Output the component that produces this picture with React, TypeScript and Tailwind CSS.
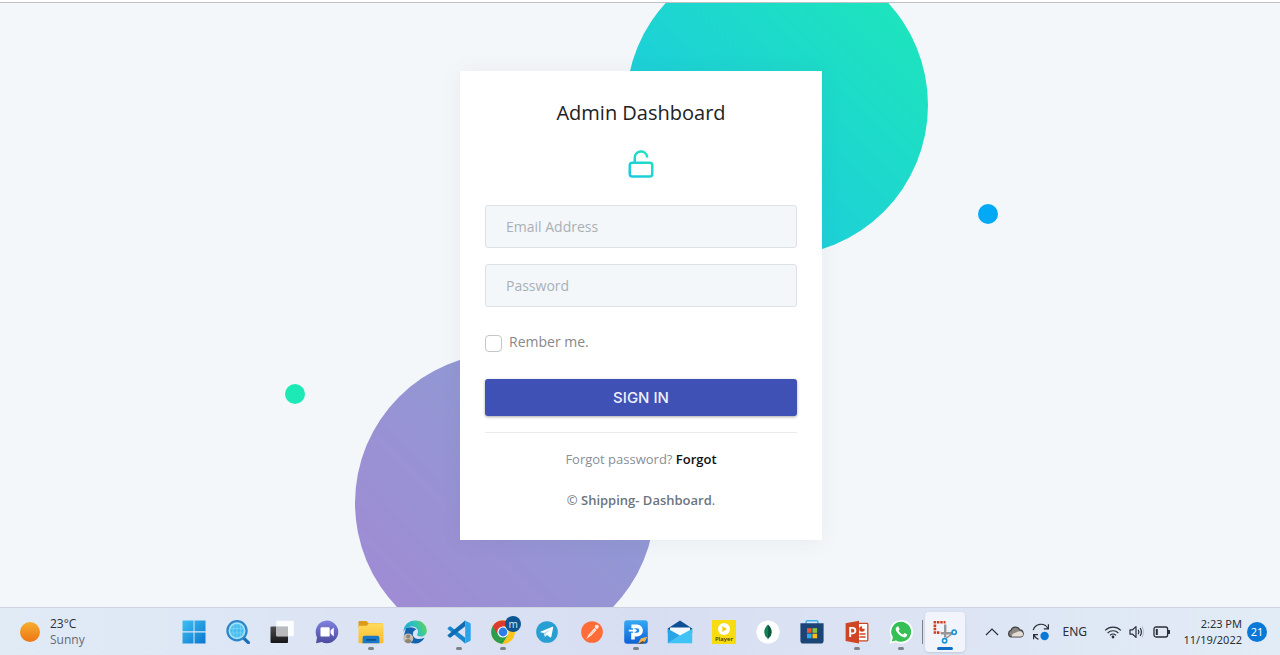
import type { ReactNode } from "react";

function WindowsIcon() {
  return (
    <svg viewBox="0 0 24 24" className="size-6">
      <defs>
        <linearGradient id="win" x1="0" y1="0" x2="1" y2="1" gradientUnits="objectBoundingBox">
          <stop offset="0" stopColor="#3fc1f3" />
          <stop offset="1" stopColor="#0a76d0" />
        </linearGradient>
      </defs>
      <path fill="url(#win)" d="M0.5 0.5H11.5V11.3H0.5ZM12.5 0.5H23.5V11.3H12.5ZM0.5 12.4H11.5V23.5H0.5ZM12.5 12.4H23.5V23.5H12.5Z" />
    </svg>
  );
}

function SearchIcon() {
  return (
    <svg viewBox="0 0 24 24" className="size-6">
      <path d="M17.5 18L22.4 22.6" stroke="#1b6fb8" strokeWidth="3.2" strokeLinecap="round" />
      <circle cx="11" cy="10.8" r="9.6" fill="#a5e0f8" stroke="#2b86cc" strokeWidth="2.2" />
      <circle cx="11" cy="10.8" r="6.8" fill="#45bdee" />
      <path d="M4.5 8.5H17.5M4.5 13H17.5M11 4V17.6M8 5Q6 11 8 16.8M14 5Q16 11 14 16.8" fill="none" stroke="#7fd5f7" strokeWidth="0.7" />
    </svg>
  );
}

function TaskViewIcon() {
  return (
    <svg viewBox="0 0 24 24" className="size-6">
      <defs>
        <linearGradient id="tv" x1="0" y1="0" x2="0" y2="1">
          <stop offset="0" stopColor="#4d4d4f" />
          <stop offset="1" stopColor="#161617" />
        </linearGradient>
      </defs>
      <rect x="0.5" y="6.5" width="17.5" height="16.5" rx="1" fill="url(#tv)" />
      <rect x="6.3" y="0.8" width="17.5" height="15.5" rx="1" fill="#fff" fillOpacity="0.9" />
      <rect x="6.3" y="6.5" width="11.7" height="9.8" fill="#b9babd" />
    </svg>
  );
}

function ChatIcon() {
  return (
    <svg viewBox="0 0 24 24" className="size-6">
      <defs>
        <linearGradient id="chat" x1="0" y1="0" x2="0" y2="1">
          <stop offset="0" stopColor="#7f82dd" />
          <stop offset="1" stopColor="#4b4a9f" />
        </linearGradient>
      </defs>
      <path fill="url(#chat)" d="M12 0.5a11.4 11.4 0 1 1-5.2 21.6L1 23.2L2 17.4A11.5 11.5 0 0 1 12 0.5Z" />
      <rect x="5.5" y="7.2" width="9.2" height="9.4" rx="1.2" fill="#fff" />
      <path fill="#fff" d="M15.6 10.2L18.8 7.4V16.4L15.6 13.6Z" />
    </svg>
  );
}

function FolderIcon() {
  return (
    <svg viewBox="0 0 26 24" className="h-6 w-[26px]">
      <defs>
        <linearGradient id="fold" x1="0" y1="0" x2="0" y2="1">
          <stop offset="0" stopColor="#ffdb5e" />
          <stop offset="1" stopColor="#f9bc2b" />
        </linearGradient>
      </defs>
      <path fill="#dd9a16" d="M0.5 2.2Q0.5 1 1.7 1H8.4L10.6 3.2H24V8H0.5Z" />
      <path fill="url(#fold)" d="M0.5 5.8H8.6L11 3.2H24.3Q25.5 3.2 25.5 4.4V22Q25.5 23.2 24.3 23.2H1.7Q0.5 23.2 0.5 22Z" />
      <path fill="#1978c8" d="M4.6 23.2V17.8Q4.6 15.8 6.6 15.8H19.4Q21.4 15.8 21.4 17.8V23.2Z" />
      <rect x="8" y="19" width="10" height="1.8" rx="0.9" fill="#0d4f8f" />
    </svg>
  );
}

function EdgeIcon() {
  return (
    <svg viewBox="0 0 24 24" className="size-6">
      <defs>
        <linearGradient id="edgeTop" x1="0" y1="0.6" x2="1" y2="0.3">
          <stop offset="0" stopColor="#1fa6dd" />
          <stop offset="0.55" stopColor="#2fc3b8" />
          <stop offset="1" stopColor="#5fd553" />
        </linearGradient>
      </defs>
      <path fill="#1263b0" d="M3 8Q9 6 13.4 9.2Q8.6 11.5 10.2 16Q12.6 21 21.5 17.8Q18.6 23.6 12 23.6Q4 23.4 0.8 16Z" />
      <path fill="url(#edgeTop)" d="M0.4 12.2C0.6 4.8 6 0.4 12.3 0.4C19.4 0.4 23.8 5.4 23.8 10.4C23.8 14.4 21 16.6 17.7 16.6C14.6 16.6 13.6 15.2 14.4 14.1C16 12 14.8 7 9.4 6.6C5.4 6.4 1.8 8.8 0.4 12.2Z" />
      <circle cx="5.2" cy="18.4" r="5" fill="#c6bdb2" />
      <circle cx="5.2" cy="16.4" r="2" fill="#8f847a" />
      <path fill="#8f847a" d="M1.8 21.8Q2.4 19 5.2 19T8.6 21.8Q5.2 24.6 1.8 21.8Z" />
    </svg>
  );
}

function VsCodeIcon() {
  return (
    <svg viewBox="0 0 24 24" className="size-6">
      <path fill="#1787d0" d="M0.6 8.2L2.5 6.5Q3 6.2 3.6 6.6L18.2 17.7V23.4L0.7 8.9Q0.3 8.5 0.6 8.2Z" />
      <path fill="#0d6cb4" d="M0.6 15.8L2.5 17.5Q3 17.8 3.6 17.4L18.2 6.3V0.6L0.7 15.1Q0.3 15.5 0.6 15.8Z" />
      <path fill="#2ba3ea" d="M17.2 0.2L23 2.9Q23.7 3.3 23.7 4V20Q23.7 20.7 23 21.1L17.2 23.8Q18.2 23.2 18.2 22.3V1.7Q18.2 0.8 17.2 0.2Z" />
    </svg>
  );
}

function ChromeIcon() {
  return (
    <span className="relative block size-6">
      <svg viewBox="0 0 24 24" className="size-6">
        <circle cx="12" cy="12" r="11.8" fill="#f9c51b" />
        <path fill="#2b9e4c" d="M1.8 6.1A11.8 11.8 0 0 0 11.4 23.8L17.1 14.9L12 12Z" />
        <path fill="#dc3b30" d="M22.2 6.4A11.8 11.8 0 0 0 1.8 6.1L7 15L12 6.4Z" />
        <path fill="#f9c51b" d="M17.1 14.9L11.8 23.8A11.8 11.8 0 0 0 22.2 6.4H12Z" />
        <circle cx="12" cy="12" r="5.6" fill="#fff" />
        <circle cx="12" cy="12" r="4.4" fill="#2f7de9" />
      </svg>
      <span className="absolute -top-1 left-3.5 flex size-4 items-center justify-center rounded-full bg-[#0e5490] text-[10px] leading-none text-[#cfe3f5]">
        m
      </span>
    </span>
  );
}

function TelegramIcon() {
  return (
    <svg viewBox="0 0 24 24" className="size-[22px]">
      <circle cx="12" cy="12" r="11.8" fill="#279fd3" />
      <path fill="#fff" d="M4.8 11.6L17.9 6.4Q19 6 18.7 7.4L16.7 17.2Q16.4 18.4 15.3 17.8L12 15.3L10.3 17Q9.8 17.4 9.6 16.8L8.4 13.2L4.9 12.2Q4.2 11.9 4.8 11.6Z" />
      <path fill="#a9d8ee" d="M8.6 13.2L15.8 8.7L10.8 13.6L9.9 16.9Z" />
    </svg>
  );
}

function PostmanIcon() {
  return (
    <svg viewBox="0 0 24 24" className="size-[22px]">
      <circle cx="12" cy="12" r="11.8" fill="#ff6c37" />
      <circle cx="17.2" cy="6.4" r="2.2" fill="#ffe9df" />
      <path fill="#ffe9df" d="M14.6 7.6L17 9.8L11.4 15.6L5.6 19.8L8.4 14.6Z" />
      <path d="M14.6 10.4L9.4 15.2" fill="none" stroke="#f6a98a" strokeWidth="0.8" />
    </svg>
  );
}

function PdfIcon() {
  return (
    <svg viewBox="0 0 24 24" className="size-6">
      <defs>
        <linearGradient id="pdf" x1="0" y1="0" x2="0" y2="1">
          <stop offset="0" stopColor="#35aaf4" />
          <stop offset="1" stopColor="#0d5fd6" />
        </linearGradient>
      </defs>
      <rect x="0.2" y="0.2" width="23.6" height="23.6" rx="3" fill="url(#pdf)" />
      <path d="M9 19.4V14.6H13A4 4 0 0 0 13 6.4H7.4" fill="none" stroke="#fff" strokeWidth="3.6" />
      <path d="M4.8 10.6H11.4M9.2 8.6L11.8 10.6L9.2 12.6" fill="none" stroke="#fff" strokeWidth="1.6" />
      <path fill="#f0b353" d="M13.8 23.8L17 18.2L23.4 16.8L20.6 22Z" />
      <path fill="#5c4a35" d="M13.8 23.8L19 21L20.6 22L18 23.8Z" />
    </svg>
  );
}

function MailIcon() {
  return (
    <svg viewBox="0 0 26 24" className="h-6 w-[26px]">
      <path fill="#0e4f96" d="M0.8 8.6L13 0.6L25.2 8.6V13H0.8Z" />
      <path fill="#f4f9fd" d="M3 7.6H23V14L13 18L3 14Z" />
      <path fill="#3fc2f4" d="M25.2 8.8L13 15.4L0.8 23.2H25.2Z" />
      <path fill="#29a5e6" d="M0.8 8.8V23.2L13 15.6Z" />
    </svg>
  );
}

function PlayerIcon() {
  return (
    <span className="relative block size-6">
      <svg viewBox="0 0 24 24" className="size-6">
        <rect width="24" height="24" rx="0.6" fill="#f8dc12" />
        <circle cx="12" cy="9" r="6" fill="#fff" />
        <path fill="#f3cf12" d="M10.3 6L15 9L10.3 12Z" />
      </svg>
      <span className="absolute inset-x-0 bottom-0.5 text-center text-[6px] leading-none font-semibold text-[#463d08]">Player</span>
    </span>
  );
}

function MongoIcon() {
  return (
    <svg viewBox="0 0 24 24" className="size-6">
      <circle cx="12" cy="12" r="11.6" fill="#fff" />
      <path fill="#12805a" d="M12 4.4Q8.2 8 8.2 12.2Q8.4 16 11.6 18.4L12 20Z" />
      <path fill="#0b5b41" d="M12 4.4Q15.8 8 15.8 12.2Q15.6 16 12.4 18.4L12 20Z" />
    </svg>
  );
}

function StoreIcon() {
  return (
    <svg viewBox="0 0 24 24" className="size-6">
      <path d="M6 4V2.2Q6 0.8 7.4 0.8H16.6Q18 0.8 18 2.2V4" fill="none" stroke="#36b1ea" strokeWidth="1.4" />
      <path fill="#1b4577" d="M0.4 3.2H23.6V20.4Q23.6 23.6 20.4 23.6H3.6Q0.4 23.6 0.4 20.4Z" />
      <path fill="#f0562f" d="M7 8.2H11.6V12.8H7Z" />
      <path fill="#8dc63a" d="M12.5 8.2H17.1V12.8H12.5Z" />
      <path fill="#2daae6" d="M7 13.7H11.6V18.3H7Z" />
      <path fill="#fdc012" d="M12.5 13.7H17.1V18.3H12.5Z" />
    </svg>
  );
}

function PowerPointIcon() {
  return (
    <svg viewBox="0 0 24 24" className="size-6">
      <rect x="12" y="3.4" width="10.8" height="17.4" rx="0.8" fill="#fff" stroke="#cf4526" strokeWidth="1.3" />
      <circle cx="17" cy="9" r="2.8" fill="#cf4526" />
      <path fill="#fff" d="M17.2 6V8.8H20V6Z" />
      <path d="M14.5 14H20.6M14.5 17H20.6" stroke="#cf4526" strokeWidth="1.4" />
      <path fill="#cf4526" d="M0.6 3.2L14 0.8V23.4L0.6 21Z" />
      <path d="M5.2 17V7.9H7.6A2.7 2.7 0 0 1 7.6 13.4H5.2" fill="none" stroke="#fff" strokeWidth="1.9" />
    </svg>
  );
}

function WhatsAppIcon() {
  return (
    <svg viewBox="0 0 24 24" className="size-6">
      <path fill="#fff" d="M12.2 0.2A11.6 11.6 0 1 1 6.8 22L0.6 23.7L2.2 17.6A11.6 11.6 0 0 1 12.2 0.2Z" />
      <path fill="#35bf54" d="M12.2 1.8A10 10 0 1 1 7 20.4L2.8 21.5L3.9 17.3A10 10 0 0 1 12.2 1.8Z" />
      <path fill="#fff" d="M8.6 6.4Q9.4 6.2 9.7 7L10.6 9.1Q10.7 9.6 9.6 10.8Q11.2 13.6 14 14.7L15.2 13.3Q15.5 13 16 13.2L18 14.2Q18.4 14.4 18.2 15.2Q17.6 17.4 15.2 17.4Q12.6 17.2 9.4 14Q6.6 11 6.6 9Q6.8 7 8.6 6.4Z" />
    </svg>
  );
}

function SnipIcon() {
  return (
    <svg viewBox="0 0 24 24" className="size-6">
      <path d="M1.9 1V14" stroke="#d03e1e" strokeWidth="2.6" strokeDasharray="2.5 0.9" />
      <path d="M4 2.2H12.5M4 12.6H7.5" stroke="#d03e1e" strokeWidth="2.6" strokeDasharray="2.4 0.9" />
      <path d="M12.2 4.5V17.4M8 13.2H19" stroke="#94979b" strokeWidth="2.4" />
      <path d="M13 18.4L19.2 13.6" stroke="#94979b" strokeWidth="1.4" />
      <circle cx="21.2" cy="12.2" r="2.1" fill="#fff" stroke="#1d94db" strokeWidth="1.7" />
      <circle cx="11.6" cy="20.8" r="2.1" fill="#fff" stroke="#1d94db" strokeWidth="1.7" />
    </svg>
  );
}

type TaskApp = { name: string; icon: ReactNode; state?: "open" | "active" };

const apps: TaskApp[] = [
  { name: "Start", icon: <WindowsIcon /> },
  { name: "Search", icon: <SearchIcon /> },
  { name: "Task view", icon: <TaskViewIcon /> },
  { name: "Chat", icon: <ChatIcon /> },
  { name: "File Explorer", icon: <FolderIcon />, state: "open" },
  { name: "Edge", icon: <EdgeIcon /> },
  { name: "Visual Studio Code", icon: <VsCodeIcon />, state: "open" },
  { name: "Chrome", icon: <ChromeIcon />, state: "open" },
  { name: "Telegram", icon: <TelegramIcon /> },
  { name: "Postman", icon: <PostmanIcon /> },
  { name: "PDF editor", icon: <PdfIcon />, state: "open" },
  { name: "Mail", icon: <MailIcon /> },
  { name: "Media player", icon: <PlayerIcon /> },
  { name: "MongoDB Compass", icon: <MongoIcon /> },
  { name: "Store", icon: <StoreIcon /> },
  { name: "PowerPoint", icon: <PowerPointIcon />, state: "open" },
  { name: "WhatsApp", icon: <WhatsAppIcon />, state: "open" },
  { name: "Snipping Tool", icon: <SnipIcon />, state: "active" },
];

function TaskButton({ app }: { app: TaskApp }) {
  const active = app.state === "active";
  return (
    <button
      type="button"
      aria-label={app.name}
      className={
        active
          ? "relative flex h-10 w-10 items-center justify-center rounded bg-[#f1f4fb] shadow-sm"
          : "relative flex h-10 w-10 items-center justify-center rounded"
      }
    >
      {app.icon}
      {app.state === "open" && <span className="absolute bottom-0.5 left-[17px] h-[3px] w-1.5 rounded-full bg-[#7f8289]" />}
      {active && <span className="absolute bottom-0.5 left-3 h-[3px] w-4 rounded-full bg-[#0f6fc6]" />}
      {active && <span className="absolute top-2 -left-[3px] h-6 w-px bg-[#7d828c]" />}
    </button>
  );
}

function Tray() {
  return (
    <div className="flex flex-1 items-center justify-end pr-[13px] text-[#2b2f36]">
      <svg viewBox="0 0 14 8" className="h-2 w-3.5">
        <path d="M1 7L7 1L13 7" fill="none" stroke="currentColor" strokeWidth="1.2" />
      </svg>
      <svg viewBox="0 0 18 12" className="ml-2 h-3 w-[18px]">
        <path fill="#8a8682" stroke="#3e3f42" strokeWidth="1.2" d="M4.5 11A3.4 3.4 0 0 1 4 4.4A4.8 4.8 0 0 1 12.8 3.8A3.7 3.7 0 0 1 13.6 11Z" />
        <path fill="#e4dcd3" d="M4.8 10.4Q5 7 9 6.4Q12 4.6 14.4 5.4Q16.6 6.8 15.8 9.4Q15 10.6 13.6 10.4Z" />
      </svg>
      <svg viewBox="0 0 18 18" className="ml-[7px] size-[18px]">
        <path d="M1.2 7.2A8 8 0 0 1 15.8 5.2M16.4 1.2V5.8H11.8M6.4 16.4A8 8 0 0 1 2 12M1.6 16.2V11.6H6" fill="none" stroke="currentColor" strokeWidth="1.2" />
        <circle cx="12.6" cy="13" r="4.2" fill="#0a78d6" />
      </svg>
      <span className="ml-3 w-6 text-[12px] leading-4">ENG</span>
      <svg viewBox="0 0 18 14" className="ml-[18px] h-3.5 w-[18px]">
        <path d="M1.2 5.4A11 11 0 0 1 16.8 5.4M3.6 8A7.6 7.6 0 0 1 14.4 8M6 10.4A4.3 4.3 0 0 1 12 10.4" fill="none" stroke="currentColor" strokeWidth="1.2" />
        <circle cx="9" cy="12" r="1.4" fill="currentColor" />
      </svg>
      <svg viewBox="0 0 16 14" className="ml-[7px] h-3.5 w-4">
        <path d="M1 4.8H3.6L7 1.6V12.4L3.6 9.2H1ZM9.2 4.8Q10.6 7 9.2 9.2M11.2 3Q13.6 7 11.2 11" fill="none" stroke="currentColor" strokeWidth="1.2" strokeLinejoin="round" />
        <path d="M13.2 1.4Q16.2 7 13.2 12.6" fill="none" stroke="#b6bcc6" strokeWidth="1" />
      </svg>
      <svg viewBox="0 0 18 12" className="ml-2 h-3 w-[18px]">
        <rect x="1" y="1" width="13.6" height="10" rx="2" fill="none" stroke="currentColor" strokeWidth="1.3" />
        <rect x="2.8" y="3" width="2" height="6" fill="currentColor" />
        <path d="M16 4V8" stroke="currentColor" strokeWidth="2" />
      </svg>
      <div className="ml-3 flex flex-col text-right text-[11px] leading-4 whitespace-nowrap">
        <span>2:23 PM</span>
        <span>11/19/2022</span>
      </div>
      <span className="ml-[5px] flex size-5 shrink-0 items-center justify-center rounded-full bg-[#0a78d6] text-[11px] leading-none text-white">21</span>
    </div>
  );
}

function Taskbar() {
  return (
    <footer className="relative z-10 flex h-12 items-center border-t border-[#cdd3e0] bg-linear-to-r from-[#e1ebf6] via-[#d7def2] to-[#e2ecf6] font-['Noto_Sans','Open_Sans',sans-serif]">
      <div className="flex w-[174px] shrink-0 items-center gap-2.5 pl-5">
        <span className="size-5 rounded-full bg-linear-to-b from-[#f5ae2e] to-[#ee7414]" />
        <div className="flex flex-col font-['Open_Sans',sans-serif] text-[12px] leading-4">
          <span className="text-[#2b2f36]">23°C</span>
          <span className="text-[#646b76]">Sunny</span>
        </div>
      </div>
      <nav aria-label="Taskbar" className="flex w-[791px] shrink-0 justify-between">
        {apps.map((app) => (
          <TaskButton key={app.name} app={app} />
        ))}
      </nav>
      <Tray />
    </footer>
  );
}

function UnlockIcon() {
  return (
    <svg viewBox="0 0 24 24" className="size-[30px]" fill="none" stroke="url(#lock)" strokeWidth="2" strokeLinecap="round" strokeLinejoin="round">
      <defs>
        <linearGradient id="lock" x1="24" y1="0" x2="0" y2="24" gradientUnits="userSpaceOnUse">
          <stop offset="0" stopColor="#1de9b6" />
          <stop offset="1" stopColor="#1dc4e9" />
        </linearGradient>
      </defs>
      <rect x="3" y="11" width="18" height="11" rx="2" />
      <path d="M7 11V7a5 5 0 0 1 9.9-1" />
    </svg>
  );
}

const fieldClass =
  "block h-[43px] w-full rounded-[3px] border border-[#dde2e8] bg-[#f4f7fa] px-5 text-[14px] text-[#495057] placeholder:text-[#aab0b6] outline-none";

function LoginCard() {
  return (
    <div className="relative w-[362px]">
      <div className="absolute -top-[117px] left-[166px] size-[302px] rounded-full bg-[linear-gradient(-135deg,#1de9b6,#1dc4e9)]" />
      <div className="absolute top-[282px] -left-[105px] size-[300px] rounded-full bg-[linear-gradient(-135deg,#899fd4,#a389d4)]" />
      <div className="absolute top-[313px] -left-[175px] size-5 rounded-full bg-[#1de9b6]" />
      <div className="absolute top-[133px] left-[518px] size-5 rounded-full bg-[#04a9f5]" />
      <form
        onSubmit={(event) => event.preventDefault()}
        className="relative flex flex-col items-center bg-white px-[25px] py-[30px] shadow-[0_1px_20px_rgba(69,90,100,0.08)]"
      >
        <h1 className="text-[20px] leading-6 text-[#222]">Admin Dashboard</h1>
        <div className="mt-6">
          <UnlockIcon />
        </div>
        <div className="mt-[26px] flex w-full flex-col gap-4">
          <input type="email" aria-label="Email Address" placeholder="Email Address" className={fieldClass} />
          <input type="password" aria-label="Password" placeholder="Password" className={fieldClass} />
        </div>
        <label className="mt-6 flex w-full items-center gap-[7px] text-[14px] leading-5 text-[#888]">
          <input type="checkbox" className="mt-1 size-[17px] appearance-none rounded-[4px] border border-[#c3c6ca] bg-white" />
          Rember me.
        </label>
        <button
          type="submit"
          className="mt-[27px] h-[37px] w-full rounded-[3px] bg-[#3f51b5] font-[Inter,sans-serif] text-[15px] leading-6 font-medium text-[#eef0fa] shadow-[0_1px_3px_rgba(0,0,0,0.35)]"
        >
          SIGN IN
        </button>
        <hr className="mt-4 w-full border-t border-[#e9ebed]" />
        <p className="mt-4 text-[13px] leading-5 text-[#888f96]">
          Forgot password?{" "}
          <a href="#forgot" className="font-semibold text-[#111]">
            Forgot
          </a>
        </p>
        <p className="mt-[21px] text-[13px] leading-5 text-[#6c757d]">
          © <span className="font-semibold">Shipping- Dashboard</span>.
        </p>
      </form>
    </div>
  );
}

export default function App() {
  return (
    <div className="flex min-h-screen flex-col bg-[#f4f7fa] font-['Open_Sans','Noto_Sans',sans-serif]">
      <div className="h-[3px] border-b border-[#bfc1c4] bg-white" />
      <main className="flex flex-1 items-center justify-center overflow-hidden pt-px pl-0.5">
        <LoginCard />
      </main>
      <Taskbar />
    </div>
  );
}
